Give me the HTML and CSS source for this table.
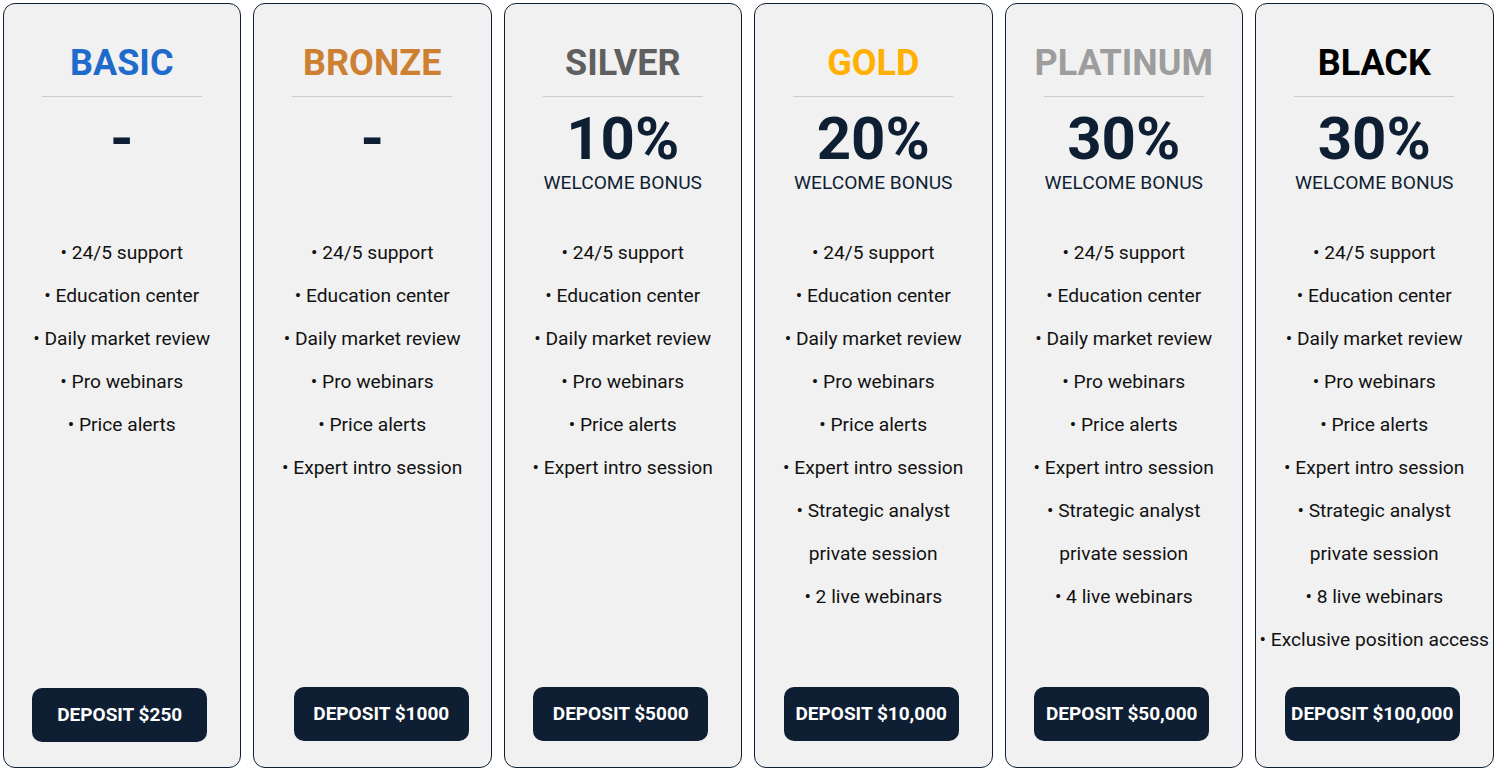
FILE: index.html
```html
<!DOCTYPE html>
<html lang="en">
<head>
<meta charset="utf-8">
<title>Account tiers</title>
<link rel="stylesheet" href="styles.css">
</head>
<body>
<div class="tiers">
  <div class="card">
    <h2 class="title basic">BASIC</h2>
    <div class="divider"></div>
    <div class="bonus"><div class="pct">-</div></div>
    <ul class="features">
      <li>• 24/5 support</li>
      <li>• Education center</li>
      <li>• Daily market review</li>
      <li>• Pro webinars</li>
      <li>• Price alerts</li>
    </ul>
    <a class="btn btn-low">DEPOSIT $250</a>
  </div>
  <div class="card">
    <h2 class="title bronze">BRONZE</h2>
    <div class="divider"></div>
    <div class="bonus"><div class="pct">-</div></div>
    <ul class="features">
      <li>• 24/5 support</li>
      <li>• Education center</li>
      <li>• Daily market review</li>
      <li>• Pro webinars</li>
      <li>• Price alerts</li>
      <li>• Expert intro session</li>
    </ul>
    <a class="btn btn-shift">DEPOSIT $1000</a>
  </div>
  <div class="card">
    <h2 class="title silver">SILVER</h2>
    <div class="divider"></div>
    <div class="bonus"><div class="pct">10%</div><div class="label">WELCOME BONUS</div></div>
    <ul class="features">
      <li>• 24/5 support</li>
      <li>• Education center</li>
      <li>• Daily market review</li>
      <li>• Pro webinars</li>
      <li>• Price alerts</li>
      <li>• Expert intro session</li>
    </ul>
    <a class="btn">DEPOSIT $5000</a>
  </div>
  <div class="card">
    <h2 class="title gold">GOLD</h2>
    <div class="divider"></div>
    <div class="bonus"><div class="pct">20%</div><div class="label">WELCOME BONUS</div></div>
    <ul class="features">
      <li>• 24/5 support</li>
      <li>• Education center</li>
      <li>• Daily market review</li>
      <li>• Pro webinars</li>
      <li>• Price alerts</li>
      <li>• Expert intro session</li>
      <li>• Strategic analyst<br>private session</li>
      <li>• 2 live webinars</li>
    </ul>
    <a class="btn">DEPOSIT $10,000</a>
  </div>
  <div class="card">
    <h2 class="title platinum">PLATINUM</h2>
    <div class="divider"></div>
    <div class="bonus"><div class="pct">30%</div><div class="label">WELCOME BONUS</div></div>
    <ul class="features">
      <li>• 24/5 support</li>
      <li>• Education center</li>
      <li>• Daily market review</li>
      <li>• Pro webinars</li>
      <li>• Price alerts</li>
      <li>• Expert intro session</li>
      <li>• Strategic analyst<br>private session</li>
      <li>• 4 live webinars</li>
    </ul>
    <a class="btn">DEPOSIT $50,000</a>
  </div>
  <div class="card">
    <h2 class="title black">BLACK</h2>
    <div class="divider"></div>
    <div class="bonus"><div class="pct">30%</div><div class="label">WELCOME BONUS</div></div>
    <ul class="features">
      <li>• 24/5 support</li>
      <li>• Education center</li>
      <li>• Daily market review</li>
      <li>• Pro webinars</li>
      <li>• Price alerts</li>
      <li>• Expert intro session</li>
      <li>• Strategic analyst<br>private session</li>
      <li>• 8 live webinars</li>
      <li>• Exclusive position access</li>
    </ul>
    <a class="btn">DEPOSIT $100,000</a>
  </div>
</div>
</body>
</html>
```

FILE: styles.css
```css
* { box-sizing: border-box; }
html, body { margin: 0; padding: 0; background: #ffffff; }
body { font-family: Roboto, "Liberation Sans", Arial, sans-serif; }

.tiers {
  display: grid;
  grid-template-columns: repeat(6, 1fr);
  gap: 12px;
  padding: 2.5px 1.5px 0.5px 2.5px;
  height: 768px;
}

.card {
  display: flex;
  flex-direction: column;
  align-items: center;
  background: #f1f1f1;
  border: 1px solid #0f1f33;
  border-radius: 12px;
  padding: 0 2px;
  text-align: center;
}

.title {
  margin: 38px 0 0;
  font-size: 36px;
  line-height: 43px;
  font-weight: 700;
}
.basic { color: #1f6bcb; }
.bronze { color: #cd7f32; }
.silver { color: #5f5f5f; }
.gold { color: #ffb000; }
.platinum { color: #9d9d9d; }
.black { color: #000000; }

.divider {
  width: 160px;
  height: 1px;
  background: #cccccc;
  margin-top: 11px;
}

.bonus {
  height: 84px;
  margin-top: 14px;
  color: #0f1f33;
}
.pct {
  font-size: 60px;
  font-weight: 700;
  line-height: 56px;
}
.label {
  margin-top: 4.5px;
  font-size: 19.2px;
  line-height: 23px;
}

.features {
  list-style: none;
  margin: 36px 0 0;
  padding: 0;
  color: #111111;
  font-size: 19.2px;
  line-height: 43px;
}

.btn {
  margin-top: auto;
  margin-bottom: 26px;
  margin-right: 4px;
  width: 175px;
  height: 54px;
  display: flex;
  align-items: center;
  justify-content: center;
  background: #0f1f33;
  color: #ffffff;
  border-radius: 10px;
  font-size: 19px;
  font-weight: 700;
  text-decoration: none;
}
.btn-low { margin-bottom: 25px; }
.btn-shift { margin-right: 0; margin-left: 18px; }
```
